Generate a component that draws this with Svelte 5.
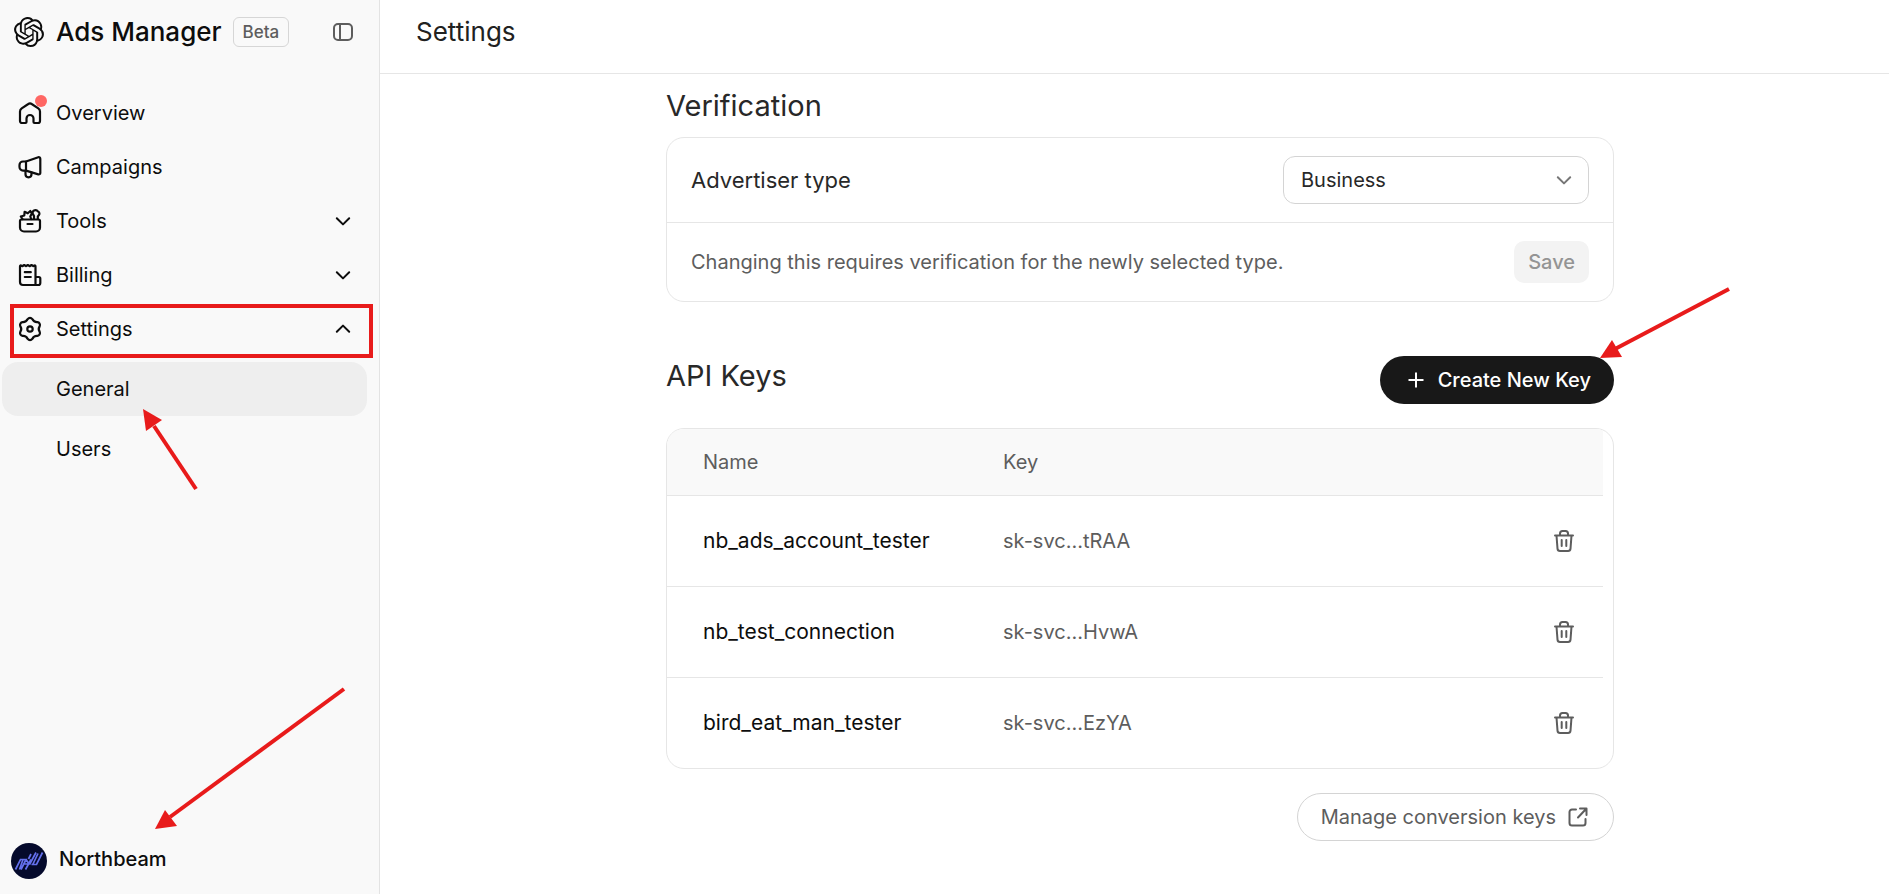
<script lang="ts">
	let advertiserType = $state('Business');

	const apiKeys = [
		{ name: 'nb_ads_account_tester', key: 'sk-svc...tRAA' },
		{ name: 'nb_test_connection', key: 'sk-svc...HvwA' },
		{ name: 'bird_eat_man_tester', key: 'sk-svc...EzYA' }
	];
</script>

{#snippet chevron(up: boolean)}
	<svg class="chevron" width="16" height="16" viewBox="0 0 16 16" aria-hidden="true">
		<path d={up ? 'M1.8 10.8 8 4.6l6.2 6.2' : 'M1.8 5.2 8 11.4l6.2-6.2'} />
	</svg>
{/snippet}

<div class="app">
	<aside>
		<div class="brand">
			<svg class="logo" width="30" height="30" viewBox="0 0 24 24" aria-hidden="true">
				<path
					d="M22.2819 9.8211a5.9847 5.9847 0 0 0-.5157-4.9108 6.0462 6.0462 0 0 0-6.5098-2.9A6.0651 6.0651 0 0 0 4.9807 4.1818a5.9847 5.9847 0 0 0-3.9977 2.9 6.0462 6.0462 0 0 0 .7427 7.0966 5.98 5.98 0 0 0 .511 4.9107 6.051 6.051 0 0 0 6.5146 2.9001A5.9847 5.9847 0 0 0 13.2599 24a6.0557 6.0557 0 0 0 5.7718-4.2058 5.9894 5.9894 0 0 0 3.9977-2.9001 6.0557 6.0557 0 0 0-.7475-7.0729zm-9.022 12.6081a4.4755 4.4755 0 0 1-2.8764-1.0408l.1419-.0804 4.7783-2.7582a.7948.7948 0 0 0 .3927-.6813v-6.7369l2.02 1.1686a.071.071 0 0 1 .038.052v5.5826a4.504 4.504 0 0 1-4.4945 4.4944zm-9.6607-4.1254a4.4708 4.4708 0 0 1-.5346-3.0137l.142.0852 4.783 2.7582a.7712.7712 0 0 0 .7806 0l5.8428-3.3685v2.3324a.0804.0804 0 0 1-.0332.0615L9.74 19.9502a4.4992 4.4992 0 0 1-6.1408-1.6464zM2.3408 7.8956a4.485 4.485 0 0 1 2.3655-1.9728V11.6a.7664.7664 0 0 0 .3879.6765l5.8144 3.3543-2.0201 1.1685a.0757.0757 0 0 1-.071 0l-4.8303-2.7865A4.504 4.504 0 0 1 2.3408 7.872zm16.5963 3.8558L13.1038 8.364 15.1192 7.2a.0757.0757 0 0 1 .071 0l4.8303 2.7913a4.4944 4.4944 0 0 1-.6765 8.1042v-5.6772a.79.79 0 0 0-.407-.667zm2.0107-3.0231l-.142-.0852-4.7735-2.7818a.7759.7759 0 0 0-.7854 0L9.409 9.2297V6.8974a.0662.0662 0 0 1 .0284-.0615l4.8303-2.7866a4.4992 4.4992 0 0 1 6.6802 4.66zM8.3065 12.863l-2.02-1.1638a.0804.0804 0 0 1-.038-.0567V6.0742a4.4992 4.4992 0 0 1 7.3757-3.4537l-.142.0805L8.704 5.459a.7948.7948 0 0 0-.3927.6813zm1.0976-2.3654l2.602-1.4998 2.6069 1.4998v2.9994l-2.5974 1.4997-2.6067-1.4997Z"
				/>
			</svg>
			<span class="brand-name">Ads Manager</span>
			<span class="beta">Beta</span>
			<button class="icon-btn collapse" aria-label="Collapse sidebar">
				<svg width="20" height="18" viewBox="0 0 20 18">
					<rect x="1" y="1" width="18" height="16" rx="4" />
					<path d="M7 1v16" />
				</svg>
			</button>
		</div>

		<nav>
			<ul>
				<li>
					<a href="#overview">
						<svg class="icon" width="24" height="24" viewBox="0 0 24 24" aria-hidden="true">
							<path
								d="M2 10.6c0-1.4.6-2.5 1.7-3.3l6.6-4.3a3 3 0 0 1 3.4 0l6.6 4.3c1.1.8 1.7 1.9 1.7 3.3V20a2 2 0 0 1-2 2h-3.500a1 1 0 0 1-1-1v-3.500a3.500 3.500 0 0 0-7 0V21a1 1 0 0 1-1 1H4a2 2 0 0 1-2-2z"
							/>
						</svg>
						<span class="dot"></span>
						Overview
					</a>
				</li>
				<li>
					<a href="#campaigns">
						<svg class="icon" width="24" height="24" viewBox="0 0 24 24" aria-hidden="true">
							<path d="M8 6.500 20.300 2.300A1.500 1.500 0 0 1 22.300 3.700V18a1.500 1.500 0 0 1-2 1.400L8 15.600z" />
							<path d="M8 6.500H5A3.500 3.500 0 0 0 1.500 10v2.100A3.500 3.500 0 0 0 5 15.600h3M7.500 15.800v3.500a3 3 0 0 0 6 0v-1.800" />
						</svg>
						Campaigns
					</a>
				</li>
				<li>
					<a href="#tools">
						<svg class="icon" width="24" height="24" viewBox="0 0 24 24" aria-hidden="true">
							<path d="M3.500 10.500h17A1.500 1.500 0 0 1 22 12v6.500a4 4 0 0 1-4 4H6a4 4 0 0 1-4-4V12a1.500 1.500 0 0 1 1.500-1.500zM9.500 15h5" />
							<path d="M4.500 10 2.800 7.500l3.500-1 .3-3.700 3.200 1.500L12.300 2l1.500 2.500-1.500 3 .9 2.500M16 10V7l-1.500-2.800a3 3 0 0 1 5.500-1.700c1.600.6 1.900 2.500.8 3.700L19.800 7.500V10" />
						</svg>
						Tools
						{@render chevron(false)}
					</a>
				</li>
				<li>
					<a href="#billing">
						<svg class="icon" width="24" height="24" viewBox="0 0 24 24" aria-hidden="true">
							<path d="M17.500 22V3.600q0-1.800-1.600-.8l-.6.4-1.800-1.200-1.900 1.200L9.800 2 8 3.200 6.200 2l-1.900 1.200-.6-.4Q2 1.800 2 3.600v15.400a3 3 0 0 0 3 3H20.300a2 2 0 0 0 2-2v-4.500a1.500 1.500 0 0 0-1.500-1.500h-3.300" />
							<path d="M6.800 9.200h6M6.800 14h6" />
						</svg>
						Billing
						{@render chevron(false)}
					</a>
				</li>
				<li>
					<a href="#settings">
						<svg class="icon" width="24" height="24" viewBox="0 0 24 24" aria-hidden="true">
							<path
								d="M9.7 2.1A2.9 2.9 0 0 1 14.3 2.1Q15.85 5.33 19.42 5.06A2.9 2.9 0 0 1 21.72 9.04Q19.7 12 21.72 14.96A2.9 2.9 0 0 1 19.42 18.94Q15.85 18.67 14.3 21.9A2.9 2.9 0 0 1 9.7 21.9Q8.15 18.67 4.58 18.94A2.9 2.9 0 0 1 2.28 14.96Q4.3 12 2.28 9.04A2.9 2.9 0 0 1 4.58 5.06Q8.15 5.33 9.7 2.1z"
							/>
							<circle cx="12" cy="12" r="2.700" />
						</svg>
						Settings
						{@render chevron(true)}
					</a>
					<span class="highlight"></span>
					<ul class="sub">
						<li>
							<a href="#general" class="active" aria-current="page">General</a>
							<svg class="arrow arrow-general" width="58" height="84" viewBox="0 0 58 84" aria-hidden="true">
								<path d="M54 81 12 18" />
								<polygon points="1,1 20,12 4,23" />
							</svg>
						</li>
						<li><a href="#users">Users</a></li>
					</ul>
				</li>
			</ul>
		</nav>

		<div class="account">
			<svg width="36" height="36" viewBox="0 0 36 36" aria-hidden="true">
				<circle cx="18" cy="18" r="18" fill="#050a2c" />
				<path
					d="M4.500 26.500 9.500 16.500H12L8.500 26.500M12 16.500h3L10 26.500M14.500 26.500l5.500-10M13.500 21h5.500M15 16.500l3.500 5M18.500 21.500 25 9.500M20 11l-2.500 5M20.500 21.500h5L31.500 9.500M27 10.500l-5 10.500"
					fill="none"
					stroke="#6470ee"
					stroke-width="1.700"
				/>
			</svg>
			<span>Northbeam</span>
			<svg class="arrow arrow-account" width="194" height="146" viewBox="0 0 194 146" aria-hidden="true">
				<path d="M190 3 16 131" />
				<polygon points="1,143 11,124 23,140" />
			</svg>
		</div>
	</aside>

	<div class="page">
		<header>
			<h1>Settings</h1>
		</header>

		<main>
			<section>
				<h2>Verification</h2>
				<div class="card">
					<div class="row">
						<label for="advertiser-type">Advertiser type</label>
						<div class="select">
							<select id="advertiser-type" bind:value={advertiserType}>
								<option>Business</option>
								<option>Individual</option>
							</select>
							{@render chevron(false)}
						</div>
					</div>
					<div class="row">
						<p>Changing this requires verification for the newly selected type.</p>
						<button class="save" disabled>Save</button>
					</div>
				</div>
			</section>

			<section>
				<div class="section-head">
					<h2>API Keys</h2>
					<div class="create-wrap">
						<button class="create">
							<svg width="16" height="16" viewBox="0 0 16 16" aria-hidden="true">
								<path d="M8 .5v15M.5 8h15" />
							</svg>
							Create New Key
						</button>
						<svg class="arrow arrow-create" width="134" height="74" viewBox="0 0 134 74" aria-hidden="true">
							<path d="M130 3 16 63" />
							<polygon points="1,72 13,54 23,71" />
						</svg>
					</div>
				</div>

				<div class="card keys">
					<table>
						<thead>
							<tr>
								<th class="name">Name</th>
								<th>Key</th>
								<th class="actions" aria-label="Actions"></th>
							</tr>
						</thead>
						<tbody>
							{#each apiKeys as item}
								<tr>
									<td class="key-name">{item.name}</td>
									<td class="key">{item.key}</td>
									<td class="actions">
										<button class="icon-btn" aria-label="Delete {item.name}">
											<svg width="20" height="24" viewBox="0 0 20 24">
												<path d="M1 6.500h18M6 6.500V4.500A2.500 2.500 0 0 1 8.500 2h3A2.500 2.500 0 0 1 14 4.500v2M2.500 6.500l1 13.200A2.500 2.500 0 0 0 6 22h8a2.500 2.500 0 0 0 2.500-2.300l1-13.200M7.700 11v6M12.300 11v6" />
											</svg>
										</button>
									</td>
								</tr>
							{/each}
						</tbody>
					</table>
				</div>

				<div class="footer">
					<a class="manage" href="#conversion-keys">
						Manage conversion keys
						<svg width="20" height="20" viewBox="0 0 20 20" aria-hidden="true">
							<path d="M8 2.500H4A2.500 2.500 0 0 0 1.500 5v11A2.500 2.500 0 0 0 4 18.500h11a2.500 2.500 0 0 0 2.500-2.500v-4M12 1.500h6.500V8M18 2 10 10.500" />
						</svg>
					</a>
				</div>
			</section>
		</main>
	</div>
</div>

<style>
	:global(body) {
		margin: 0;
		background: #fff;
	}

	.app {
		display: flex;
		min-height: 100vh;
		font-family: Inter, 'Liberation Sans', sans-serif;
		font-size: 20px;
		line-height: 28px;
		color: #0d0d0d;
	}

	h1,
	h2,
	p {
		margin: 0;
		font-weight: 400;
	}

	button,
	select {
		font: inherit;
	}

	button {
		border: 0;
		cursor: pointer;
	}

	svg {
		flex-shrink: 0;
	}

	ul {
		list-style: none;
		margin: 0;
		padding: 0;
	}

	aside {
		display: flex;
		flex-direction: column;
		flex: 0 0 379px;
		border-right: 1px solid #e3e3e3;
		background: #f9f9f9;
	}

	.brand {
		display: flex;
		align-items: center;
		height: 64px;
		padding: 0 22px 0 14px;
	}

	.logo {
		fill: #0d0d0d;
	}

	.brand-name {
		margin: 0 11px 0 12px;
		font-size: 26px;
		font-weight: 500;
		white-space: nowrap;
	}

	.beta {
		padding: 0 9px;
		border: 1px solid #d6d6d6;
		border-radius: 6px;
		font-size: 17px;
		font-weight: 500;
		color: #5d5d5d;
	}

	.icon-btn {
		display: inline-flex;
		padding: 4px;
		background: none;
		fill: none;
		stroke: #5d5d5d;
		stroke-width: 2;
		stroke-linecap: round;
		stroke-linejoin: round;
	}

	.collapse {
		margin-left: auto;
	}

	nav {
		padding: 22px 12px 0 2px;
	}

	nav li {
		position: relative;
	}

	nav a {
		position: relative;
		display: flex;
		align-items: center;
		gap: 14px;
		height: 54px;
		padding: 0 16px;
		border-radius: 16px;
		color: inherit;
		text-decoration: none;
	}

	.icon {
		overflow: visible;
		fill: none;
		stroke: #0d0d0d;
		stroke-width: 2.2;
		stroke-linejoin: round;
		stroke-linecap: round;
	}

	.chevron {
		margin-left: auto;
		fill: none;
		stroke: currentColor;
		stroke-width: 2;
		stroke-linecap: round;
		stroke-linejoin: round;
	}

	.dot {
		position: absolute;
		top: 9px;
		left: 33px;
		width: 12px;
		height: 12px;
		border-radius: 50%;
		background: #ff6764;
	}

	.sub {
		display: flex;
		flex-direction: column;
		gap: 6px;
		padding-top: 6px;
	}

	.sub a {
		padding-left: 54px;
	}

	.active {
		background: #eee;
	}

	.highlight {
		position: absolute;
		top: 2px;
		left: 8px;
		right: -6px;
		box-sizing: border-box;
		height: 54px;
		border: 4px solid #e81b1b;
		pointer-events: none;
	}

	.arrow {
		position: absolute;
		z-index: 1;
		fill: #e81b1b;
		stroke: none;
		pointer-events: none;
	}

	.arrow path {
		stroke: #e81b1b;
		stroke-width: 4;
	}

	.arrow-general {
		top: 46px;
		left: 140px;
	}

	.arrow-account {
		bottom: 62px;
		left: 154px;
	}

	.arrow-create {
		right: -119px;
		bottom: 44px;
	}

	.account {
		position: relative;
		display: flex;
		align-items: flex-start;
		gap: 12px;
		margin-top: auto;
		padding: 0 11px 15px;
		font-weight: 500;
		line-height: 32px;
	}

	.page {
		flex: 1;
		min-width: 0;
	}

	header {
		display: flex;
		align-items: center;
		box-sizing: border-box;
		height: 74px;
		padding: 0 36px 10px;
		border-bottom: 1px solid #e6e6e6;
	}

	h1 {
		font-size: 26px;
		color: #212121;
	}

	main {
		display: flex;
		flex-direction: column;
		gap: 54px;
		max-width: 948px;
		margin: 0 auto;
		padding: 12px 0 52px 11px;
		color: #282828;
	}

	h2 {
		font-size: 29px;
		line-height: 40px;
	}

	.card {
		margin-top: 11px;
		border: 1px solid #e6e6e6;
		border-radius: 18px;
		overflow: hidden;
	}

	.row {
		display: flex;
		align-items: center;
		justify-content: space-between;
		gap: 24px;
		padding: 18px 24px;
	}

	.row + .row {
		border-top: 1px solid #e6e6e6;
	}

	.row label {
		font-size: 22px;
	}

	.row p {
		color: #5d5d5d;
	}

	.select {
		position: relative;
		width: 306px;
	}

	.select select {
		width: 100%;
		height: 48px;
		padding: 0 48px 0 17px;
		appearance: none;
		border: 1px solid #d4d4d4;
		border-radius: 12px;
		background: #fff;
		color: #282828;
	}

	.select .chevron {
		position: absolute;
		top: 16px;
		right: 17px;
		color: #777;
		pointer-events: none;
	}

	.save {
		height: 42px;
		padding: 0 14px;
		border-radius: 10px;
		background: #f3f3f3;
		color: #949494;
		font-weight: 500;
	}

	.section-head {
		display: flex;
		justify-content: space-between;
	}

	.create-wrap {
		position: relative;
	}

	.create {
		display: flex;
		align-items: center;
		gap: 14px;
		height: 48px;
		padding: 0 23px 0 28px;
		border-radius: 24px;
		background: #181818;
		color: #fff;
		font-weight: 500;
		white-space: nowrap;
	}

	.create svg {
		stroke: #fff;
		stroke-width: 2;
	}

	.keys {
		margin-top: 24px;
		padding-right: 10px;
	}

	table {
		width: 100%;
		border-collapse: collapse;
	}

	th,
	td {
		height: 90px;
		padding: 0 0 0 36px;
		text-align: left;
		border-bottom: 1px solid #e6e6e6;
	}

	th {
		height: 66px;
		background: #f9f9f9;
		color: #5d5d5d;
		font-weight: 400;
	}

	tbody tr:last-child td {
		border-bottom: 0;
	}

	.name {
		width: 264px;
	}

	.key-name {
		font-size: 21px;
		color: #0d0d0d;
	}

	.key {
		color: #5d5d5d;
	}

	.actions {
		padding-right: 25px;
		text-align: right;
	}

	.actions .icon-btn {
		vertical-align: middle;
	}

	.footer {
		display: flex;
		justify-content: flex-end;
		margin-top: 24px;
	}

	.manage {
		display: flex;
		align-items: center;
		gap: 12px;
		box-sizing: border-box;
		height: 48px;
		padding: 0 25px 0 23px;
		border: 1px solid #d4d4d4;
		border-radius: 24px;
		color: #5d5d5d;
		text-decoration: none;
	}

	.manage svg {
		fill: none;
		stroke: #5d5d5d;
		stroke-width: 2;
		stroke-linecap: round;
		stroke-linejoin: round;
	}
</style>
